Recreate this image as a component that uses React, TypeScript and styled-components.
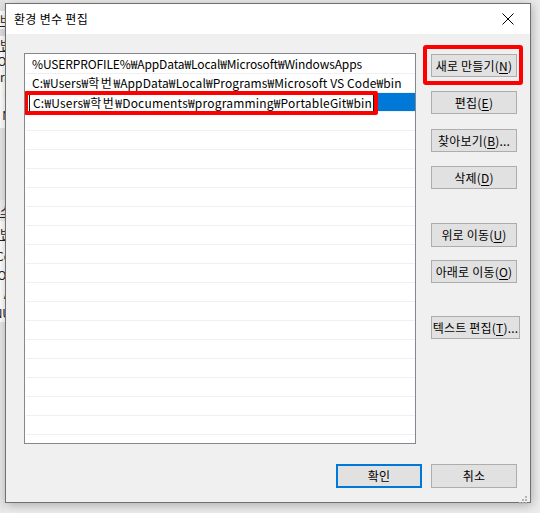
import React from "react";
import styled, { createGlobalStyle } from "styled-components";

const GlobalStyle = createGlobalStyle`
  html, body { margin: 0; padding: 0; }
  body {
    width: 540px;
    height: 513px;
    overflow: hidden;
    background: #ececec;
    font-family: "Noto Sans CJK KR", "Noto Sans", sans-serif;
    font-size: 12px;
    color: #000;
  }
`;

const Desktop = styled.div`
  position: relative;
  width: 540px;
  height: 513px;
  overflow: hidden;
`;

const BackWindow = styled.div`
  position: absolute;
  left: 0;
  top: 0;
  width: 5px;
  height: 513px;
  overflow: hidden;
  background: #f0f0f0;
  display: flex;
  flex-direction: column;
`;

const Fragment = styled.div<{ $h: number; $bg?: string; $u?: boolean }>`
  height: ${(p) => p.$h}px;
  background: ${(p) => p.$bg || "transparent"};
  display: flex;
  align-items: center;
  justify-content: flex-end;
  white-space: nowrap;
  font-size: 12px;
  line-height: 14px;
  color: #222;
  margin-right: -6px;
  text-decoration: ${(p) => (p.$u ? "underline" : "none")};
`;

const Dialog = styled.div`
  position: absolute;
  left: 5px;
  top: 3px;
  width: 524px;
  height: 498px;
  border: 1px solid #707070;
  background: #f0f0f0;
  box-shadow: 1px 2px 10px rgba(0, 0, 0, 0.28);
  display: flex;
  flex-direction: column;
`;

const TitleBar = styled.div`
  height: 30px;
  background: #fff;
  display: flex;
  align-items: center;
  justify-content: space-between;
  padding: 0 8px 0 8px;
  flex-shrink: 0;
`;

const Title = styled.span`
  font-size: 12px;
  line-height: 16px;
  margin-top: -1px;
  letter-spacing: 0.3px;
`;

const CloseBtn = styled.div`
  width: 30px;
  height: 30px;
  display: flex;
  align-items: center;
  justify-content: center;
  margin-right: -1px;
`;

const Body = styled.div`
  position: relative;
  flex: 1;
  padding: 19px 13px 0 18px;
  display: flex;
  flex-direction: column;
`;

const TopRow = styled.div`
  display: flex;
  align-items: flex-start;
`;

const ListBox = styled.div`
  width: 390px;
  height: 388px;
  border: 1px solid #828790;
  background: #fff;
  padding-top: 1px;
  box-sizing: content-box;
  overflow: hidden;
  display: flex;
  flex-direction: column;
  flex-shrink: 0;
`;

const Row = styled.div<{ $selected?: boolean; $ls?: number }>`
  position: relative;
  height: 18px;
  flex-shrink: 0;
  border-bottom: 1px solid #f0f0f0;
  margin-left: 1px;
  background: ${(p) => (p.$selected ? "#0078d7" : "transparent")};
  display: flex;
  align-items: center;
  padding-left: 6px;
  white-space: nowrap;
  font-size: 12px;
  line-height: 16px;
  letter-spacing: ${(p) => p.$ls || 0}px;
`;

const Ko = styled.span`
  letter-spacing: 1.5px;
`;

const EditField = styled.div`
  position: absolute;
  left: -2px;
  top: -2px;
  width: 346px;
  height: 16px;
  border: 4px solid #ff0000;
  border-radius: 2px;
  background: #fff;
  display: flex;
  align-items: stretch;
  z-index: 2;
`;

const EditInner = styled.div`
  flex: 1;
  margin-left: 1px;
  border-left: 1px solid #1a1a1a;
  border-right: 1px solid #1a1a1a;
  padding-left: 3px;
  display: flex;
  align-items: center;
  white-space: nowrap;
  overflow: hidden;
  font-size: 12px;
  line-height: 16px;
  letter-spacing: 0.2px;
`;

const ButtonCol = styled.div`
  margin-left: 15px;
  display: flex;
  flex-direction: column;
  align-items: flex-start;
`;

const BtnWrap = styled.div<{ $mt: number }>`
  position: relative;
  margin-top: ${(p) => p.$mt}px;
`;

const Button = styled.div<{ $w?: number; $h?: number; $default?: boolean }>`
  width: ${(p) => p.$w || 86}px;
  height: ${(p) => p.$h || 23}px;
  box-sizing: border-box;
  background: #e1e1e1;
  border: ${(p) => (p.$default ? "2px solid #0078d7" : "1px solid #adadad")};
  display: flex;
  align-items: center;
  justify-content: center;
  white-space: nowrap;
  font-size: 12px;
  line-height: 16px;
  letter-spacing: 0.2px;
`;

const Highlight = styled.div`
  position: absolute;
  left: -8px;
  right: -6px;
  top: -9px;
  bottom: -8px;
  border: 4px solid #ff0000;
  border-radius: 3px;
  pointer-events: none;
`;

const U = styled.span`
  text-decoration: underline;
  text-underline-offset: 2px;
`;

const BottomRow = styled.div`
  margin-top: 20px;
  display: flex;
  justify-content: flex-end;
  gap: 9px;
`;

const Grip = styled.div`
  position: absolute;
  right: 2px;
  bottom: 1px;
  width: 10px;
  height: 10px;
`;

const fragments: { h: number; t?: string; bg?: string; u?: boolean }[] = [
  { h: 12, bg: "#e4e4e4" },
  { h: 18, t: "버", bg: "#fff", u: true },
  { h: 8, bg: "#e0e0e0" },
  { h: 18, t: "변", bg: "#fff", u: true },
  { h: 16, t: "Or", bg: "#fff" },
  { h: 18, t: "ra", bg: "#fff" },
  { h: 18, t: "E", bg: "#fff" },
  { h: 26, t: "N", bg: "#fff" },
  { h: 76, bg: "#e8e8e8" },
  { h: 22, t: "스", u: true },
  { h: 26, t: "변", bg: "#fff", u: true },
  { h: 20, t: "Co", bg: "#fff" },
  { h: 20, t: "Or", bg: "#fff" },
  { h: 20, t: "A", bg: "#fff" },
  { h: 20, t: "NU", bg: "#fff" },
  { h: 200, bg: "#e8e8e8" },
];

export default function App() {
  return (
    <>
      <GlobalStyle />
      <Desktop>
        <BackWindow>
          {fragments.map((f, i) => (
            <Fragment key={i} $h={f.h} $bg={f.bg} $u={f.u}>
              {f.t || ""}
            </Fragment>
          ))}
        </BackWindow>
        <Dialog>
          <TitleBar>
            <Title>환경 변수 편집</Title>
            <CloseBtn>
              <svg width="12" height="12" viewBox="0 0 12 12">
                <path d="M0.5 0.5 L11.5 11.5 M11.5 0.5 L0.5 11.5" stroke="#000" strokeWidth="1" fill="none" />
              </svg>
            </CloseBtn>
          </TitleBar>
          <Body>
            <TopRow>
              <ListBox>
                <Row $ls={-0.12}>%USERPROFILE%₩AppData₩Local₩Microsoft₩WindowsApps</Row>
                <Row $ls={0.1}>
                  C:₩Users₩<Ko>학번</Ko>₩AppData₩Local₩Programs₩Microsoft VS Code₩bin
                </Row>
                <Row $selected>
                  <EditField>
                    <EditInner>
                      C:₩Users₩<Ko>학번</Ko>₩Documents₩programming₩PortableGit₩bin
                    </EditInner>
                  </EditField>
                </Row>
                {Array.from({ length: 17 }).map((_, i) => (
                  <Row key={"e" + i} />
                ))}
              </ListBox>
              <ButtonCol>
                <BtnWrap $mt={1}>
                  <Button>
                    새로 만들기(<U>N</U>)
                  </Button>
                  <Highlight />
                </BtnWrap>
                <BtnWrap $mt={14}>
                  <Button>
                    편집(<U>E</U>)
                  </Button>
                </BtnWrap>
                <BtnWrap $mt={15}>
                  <Button>
                    찾아보기(<U>B</U>)...
                  </Button>
                </BtnWrap>
                <BtnWrap $mt={14}>
                  <Button>
                    삭제(<U>D</U>)
                  </Button>
                </BtnWrap>
                <BtnWrap $mt={34}>
                  <Button $h={24}>
                    위로 이동(<U>U</U>)
                  </Button>
                </BtnWrap>
                <BtnWrap $mt={13}>
                  <Button>
                    아래로 이동(<U>O</U>)
                  </Button>
                </BtnWrap>
                <BtnWrap $mt={33}>
                  <Button $w={89}>
                    텍스트 편집(<U>T</U>)...
                  </Button>
                </BtnWrap>
              </ButtonCol>
            </TopRow>
            <BottomRow>
              <Button $h={24} $default>
                확인
              </Button>
              <Button $h={24}>취소</Button>
            </BottomRow>
            <Grip>
              <svg width="10" height="10" viewBox="0 0 10 10">
                <g fill="#b4b4b4">
                  <rect x="7" y="1" width="2" height="2" />
                  <rect x="4" y="4" width="2" height="2" />
                  <rect x="7" y="4" width="2" height="2" />
                  <rect x="1" y="7" width="2" height="2" />
                  <rect x="4" y="7" width="2" height="2" />
                  <rect x="7" y="7" width="2" height="2" />
                </g>
              </svg>
            </Grip>
          </Body>
        </Dialog>
      </Desktop>
    </>
  );
}
